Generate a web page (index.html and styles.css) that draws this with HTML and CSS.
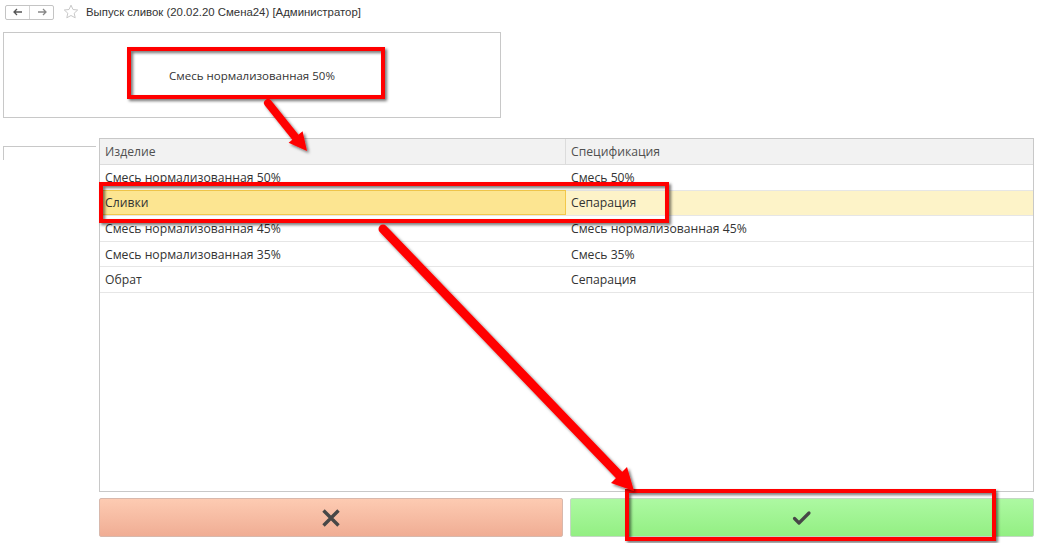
FILE: index.html
```html
<!DOCTYPE html>
<html lang="ru">
<head>
<meta charset="utf-8">
<title>Выпуск сливок</title>
<link rel="stylesheet" href="styles.css">
</head>
<body>
<div class="page">
  <div class="titlebar">
    <div class="nav">
      <span class="nav-btn"><svg width="10" height="8" viewBox="0 0 10 8"><path d="M1 4h8M4 1L1 4l3 3" fill="none" stroke="#555" stroke-width="1.3"/></svg></span>
      <span class="nav-btn"><svg width="10" height="8" viewBox="0 0 10 8"><path d="M1 4h8M6 1l3 3-3 3" fill="none" stroke="#888" stroke-width="1.3"/></svg></span>
    </div>
    <svg class="star" width="16" height="16" viewBox="0 0 16 16"><path d="M8 1.2l2 4.3 4.7.5-3.5 3.2 1 4.6L8 11.5l-4.2 2.3 1-4.6L1.3 6l4.7-.5z" fill="none" stroke="#c8c8c8" stroke-width="1"/></svg>
    <span class="title">Выпуск сливок (20.02.20 Смена24) [Администратор]</span>
  </div>

  <div class="top-panel">
    <span class="top-text">Смесь нормализованная 50%</span>
  </div>

  <div class="middle">
    <div class="left-piece"></div>
    <div class="grid">
      <div class="row head">
        <div class="cell c1">Изделие</div>
        <div class="cell c2">Спецификация</div>
      </div>
      <div class="row">
        <div class="cell c1">Смесь нормализованная 50%</div>
        <div class="cell c2">Смесь 50%</div>
      </div>
      <div class="row selected">
        <div class="cell c1">Сливки</div>
        <div class="cell c2">Сепарация</div>
      </div>
      <div class="row">
        <div class="cell c1">Смесь нормализованная 45%</div>
        <div class="cell c2">Смесь нормализованная 45%</div>
      </div>
      <div class="row">
        <div class="cell c1">Смесь нормализованная 35%</div>
        <div class="cell c2">Смесь 35%</div>
      </div>
      <div class="row">
        <div class="cell c1">Обрат</div>
        <div class="cell c2">Сепарация</div>
      </div>
    </div>
  </div>

  <div class="buttons">
    <div class="btn cancel">
      <svg width="20" height="20" viewBox="0 0 20 20"><path d="M2.5 2.5L17.5 17.5M17.5 2.5L2.5 17.5" stroke="#474747" stroke-width="3.4" stroke-linecap="butt"/></svg>
    </div>
    <div class="btn ok">
      <svg width="20" height="20" viewBox="0 0 20 20"><path d="M2.5 10.5l4.5 4.5 10-10" fill="none" stroke="#474747" stroke-width="3.2" stroke-linecap="round" stroke-linejoin="round"/></svg>
    </div>
  </div>

  <svg class="annot" width="1048" height="543" viewBox="0 0 1048 543">
    <defs>
      <filter id="sh" x="-10%" y="-10%" width="130%" height="130%">
        <feDropShadow dx="2" dy="2" stdDeviation="1.5" flood-color="#000" flood-opacity="0.55"/>
      </filter>
    </defs>
    <g filter="url(#sh)" fill="none" stroke="#ff0000" stroke-width="4">
      <rect x="129" y="49" width="254" height="48"/>
      <rect x="101" y="184" width="566" height="37"/>
      <rect x="627" y="491" width="367" height="48"/>
    </g>
    <g filter="url(#sh)">
      <line x1="268" y1="103" x2="296" y2="138" stroke="#ff0000" stroke-width="8" stroke-linecap="round"/>
      <polygon points="307,151 288.6,142.7 302.6,131.3" fill="#ff0000"/>
      <line x1="383" y1="229" x2="621" y2="477" stroke="#ff0000" stroke-width="9" stroke-linecap="round"/>
      <polygon points="634,491 611,483 627,467" fill="#ff0000"/>
    </g>
  </svg>
</div>
</body>
</html>
```

FILE: styles.css
```css
html, body {
  margin: 0;
  padding: 0;
  background: #ffffff;
}
.page {
  position: relative;
  width: 1048px;
  height: 543px;
  overflow: hidden;
  font-family: "Open Sans", "Noto Sans", sans-serif;
  color: #333;
}
.titlebar {
  height: 24px;
  display: flex;
  align-items: center;
  padding-left: 5px;
  box-sizing: border-box;
}
.nav {
  display: flex;
  border: 1px solid #c4c4c4;
  border-radius: 2px;
  height: 15px;
  box-sizing: border-box;
}
.nav-btn {
  width: 23px;
  display: flex;
  align-items: center;
  justify-content: center;
}
.nav-btn + .nav-btn {
  border-left: 1px solid #d4d4d4;
}
.star {
  margin-left: 9px;
}
.title {
  margin-left: 7px;
  font-family: "Liberation Sans", Arial, sans-serif;
  font-size: 11.4px;
  color: #333;
}
.top-panel {
  margin: 8px 0 0 3px;
  width: 498px;
  height: 86px;
  border: 1px solid #c8c8c8;
  box-sizing: border-box;
  display: flex;
  align-items: center;
  justify-content: center;
}
.top-text {
  font-size: 11.5px;
  color: #333;
}
.middle {
  display: flex;
  margin-top: 20px;
}
.left-piece {
  margin: 8px 0 0 3px;
  width: 93px;
  height: 14px;
  border-top: 1px solid #c8c8c8;
  border-left: 1px solid #c8c8c8;
  box-sizing: border-box;
}
.grid {
  margin-left: 3px;
  width: 935px;
  height: 354px;
  border: 1px solid #c8c8c8;
  box-sizing: border-box;
  font-size: 12.2px;
}
.row {
  display: flex;
  height: 25.5px;
  border-bottom: 1px solid #e6e6e6;
  box-sizing: border-box;
  padding-top: 1px;
}
.row.head {
  height: 26px;
  background: #f2f2f2;
  border-bottom: 1px solid #dcdcdc;
  color: #505050;
  padding-top: 0;
}
.cell {
  display: flex;
  align-items: center;
  padding-left: 5px;
  box-sizing: border-box;
  white-space: nowrap;
}
.c1 {
  width: 466px;
}
.c2 {
  flex: 1;
}
.head .c1 {
  border-right: 1px solid #dcdcdc;
}
.selected .c1 {
  background: #fce591;
  border: 1px solid #f3c84a;
  padding-left: 4px;
  margin-top: -2px;
}
.selected .c2 {
  background: #fdf3c8;
  margin-top: -1px;
}
.buttons {
  display: flex;
  gap: 7px;
  margin: 6px 0 0 99px;
}
.btn {
  width: 464px;
  height: 39px;
  border-radius: 2px;
  box-sizing: border-box;
  display: flex;
  align-items: center;
  justify-content: center;
}
.cancel {
  background: linear-gradient(#fdcbb2, #f0ad94);
  border: 1px solid #d8b8ac;
}
.ok {
  background: linear-gradient(#adf9a2, #93ef83);
  border: 1px solid #c4d8c4;
}
.annot {
  position: absolute;
  left: 0;
  top: 0;
  pointer-events: none;
}
```
